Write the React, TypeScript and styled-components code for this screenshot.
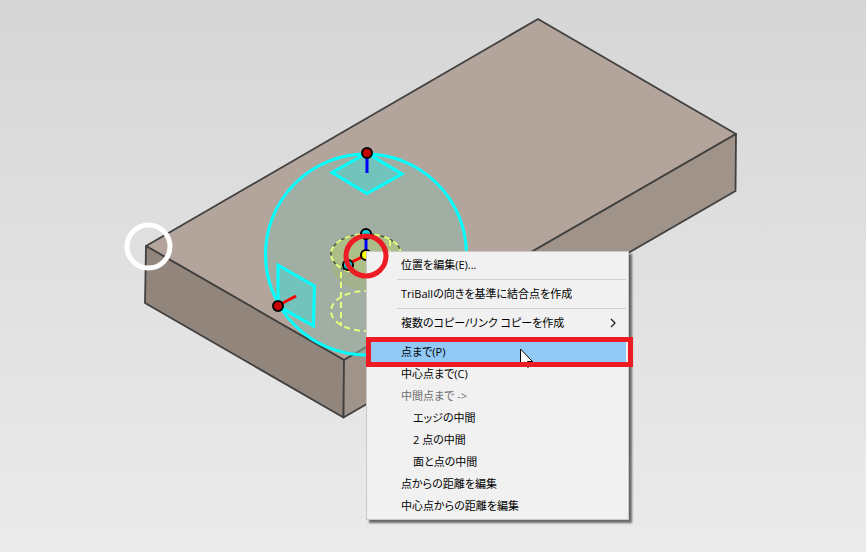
import React from "react";
import styled, { createGlobalStyle } from "styled-components";

const GlobalStyle = createGlobalStyle`
  * { box-sizing: border-box; }
  body { margin: 0; }
`;

const Viewport = styled.main`
  position: relative;
  min-height: 100vh;
  overflow: hidden;
  background: linear-gradient(#d6d6d6, #ebebeb);
`;

const Scene = styled.svg`
  position: absolute;
  inset: 0;
  width: 100%;
  height: 100%;
`;

const Overlay = styled(Scene)`
  pointer-events: none;
`;

const Menu = styled.div`
  position: absolute;
  left: 366px;
  top: 251px;
  display: flex;
  flex-direction: column;
  min-width: 263px;
  padding: 2px;
  border: 1px solid #c8c8c8;
  background: #f1f1f1;
  box-shadow: 3px 3px 2px rgba(0, 0, 0, 0.55);
  font-family: "Open Sans", "Noto Sans CJK JP", sans-serif;
  font-size: 11px;
  font-feature-settings: "palt";
`;

const MenuItem = styled.button<{ $active?: boolean; $nested?: boolean }>`
  display: flex;
  align-items: center;
  justify-content: space-between;
  height: 22px;
  padding: 0 10px 0 ${(p) => (p.$nested ? 44 : 32)}px;
  border: 0;
  background: ${(p) => (p.$active ? "#91c9f7" : "transparent")};
  color: #000;
  font: inherit;
  font-feature-settings: inherit;
  line-height: 22px;
  text-align: left;
  white-space: pre;
  &:disabled { color: #6d6d6d; }
`;

const Separator = styled.hr`
  width: auto;
  height: 1px;
  margin: 3px 0 3px 28px;
  border: 0;
  background: #d0d0d0;
`;

type Entry = {
  label?: string;
  active?: boolean;
  nested?: boolean;
  disabled?: boolean;
  submenu?: boolean;
};

const entries: Entry[] = [
  { label: "位置を編集(E)..." },
  {},
  { label: "TriBallの向きを基準に結合点を作成" },
  {},
  { label: "複数のコピー/リンク コピーを作成", submenu: true },
  {},
  { label: "点まで(P)", active: true },
  { label: "中心点まで(C)" },
  { label: "中間点まで ->", disabled: true },
  { label: "エッジの中間", nested: true },
  { label: "2 点の中間", nested: true },
  { label: "面と点の中間", nested: true },
  { label: "点からの距離を編集" },
  { label: "中心点からの距離を編集" },
];

export default function App() {
  return (
    <>
      <GlobalStyle />
      <Viewport>
        <Scene aria-hidden="true">
          <g stroke="#404040" strokeWidth="1.8" strokeLinejoin="round">
            <path d="M146 246L538 19L736 134L344 360Z" fill="#b3a59b" />
            <path d="M146 246L344 360L343.500 417.500L145 303Z" fill="#92857c" />
            <path d="M344 360L736 134L735.500 191L343.500 417.500Z" fill="#a09389" />
          </g>
          <circle cx="366" cy="254.500" r="100.500" fill="#8fb7ae" fillOpacity="0.5" stroke="#0ff" strokeWidth="3" />
          <g fill="#54d0cb" fillOpacity="0.62" stroke="#0ff" strokeWidth="3">
            <path d="M367 153L402 174L367 193.500L332 172.500Z" />
            <path d="M278 306V265L314.500 286L313.500 326Z" />
          </g>
          <path d="M331 254L333 275L341 283L354 289L367 291H400V254Z" fill="#a3b18d" />
          <ellipse cx="366" cy="254" rx="35" ry="20" fill="#adbf88" stroke="#4f5b46" strokeWidth="1.500" />
          <g fill="none" stroke="#e5fd7c" strokeWidth="2" strokeDasharray="6 4">
            <ellipse cx="366" cy="254" rx="35" ry="20" />
            <ellipse cx="366" cy="311" rx="35" ry="20" />
            <path d="M341 272V326M390 240V326" />
          </g>
          <g strokeWidth="3">
            <path d="M367 155V173M366 235V254" stroke="#00f" />
            <path d="M279 305L296 296M348 264L366 255" stroke="#f00" />
          </g>
          <g stroke="#000" strokeWidth="2">
            <circle cx="367" cy="153" r="5" fill="#c60000" />
            <circle cx="278" cy="306" r="5" fill="#c60000" />
            <circle cx="366" cy="234" r="5" fill="#00d5dc" />
            <circle cx="348" cy="265" r="5" fill="#00d5dc" />
            <circle cx="366" cy="255" r="5" fill="#ff0" />
          </g>
        </Scene>
        <Menu role="menu">
          {entries.map((e, i) =>
            e.label ? (
              <MenuItem key={i} role="menuitem" $active={e.active} $nested={e.nested} disabled={e.disabled}>
                {e.label}
                {e.submenu && (
                  <svg width="6" height="10" viewBox="0 0 6 10" fill="none" stroke="#222" strokeWidth="1.300" aria-hidden="true">
                    <path d="M1 1L5 5L1 9" />
                  </svg>
                )}
              </MenuItem>
            ) : (
              <Separator key={i} />
            )
          )}
        </Menu>
        <Overlay aria-hidden="true">
          <path d="M520.500 349V365.500L524.500 362L527 367H529L527.500 361.500H532.500Z" fill="#fff" stroke="#000" />
          <circle cx="148.500" cy="246.500" r="21.500" fill="none" stroke="#fff" strokeWidth="5" />
          <circle cx="366" cy="256" r="20" fill="none" stroke="#ed1c24" strokeWidth="5" />
          <rect x="368.500" y="339.500" width="262" height="25" fill="none" stroke="#ed1c24" strokeWidth="5" />
        </Overlay>
      </Viewport>
    </>
  );
}
